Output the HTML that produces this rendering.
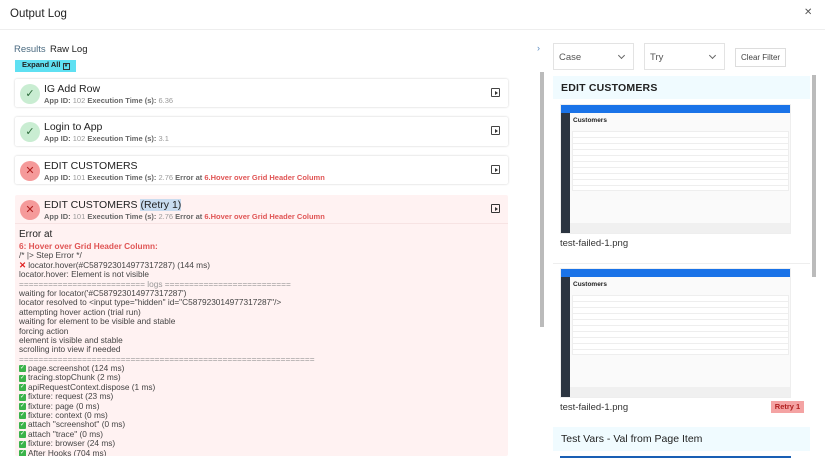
<!DOCTYPE html>
<html><head><style>
*{box-sizing:border-box;margin:0;padding:0}
html,body{width:825px;height:471px;overflow:hidden}
body{background:#fff;font-family:"Liberation Sans",sans-serif;color:#222;position:relative}
.a{position:absolute}
.card{position:absolute;left:15px;width:493px;background:#fff;box-shadow:0 0 2px rgba(0,0,0,.2);border-radius:2px}
.circ{position:absolute;left:5px;top:5px;width:20px;height:20px;border-radius:50%;text-align:center;line-height:20px;font-size:11px}
.ok{background:#c9edd2;color:#2c6a3a}
.bad{background:#f59a9a;color:#b02020}
.t{position:absolute;left:29px;top:4px;font-size:10.5px;color:#222}
.s{position:absolute;left:29px;top:17px;font-size:7.5px;font-weight:bold;color:#666;white-space:nowrap}
.s span{font-weight:normal;color:#999}
.s i{font-style:normal;color:#e05555}
.play{position:absolute;right:8px;top:9px;width:9px;height:9px;border:1px solid #444;border-radius:1px}
.play:after{content:"";position:absolute;left:2.5px;top:1.5px;border-left:3.5px solid #333;border-top:2.5px solid transparent;border-bottom:2.5px solid transparent}
.clip{position:absolute;left:15px;top:226px;width:493px;height:230px;overflow:hidden}
.log{position:absolute;left:4px;top:16px;font-size:8.3px;color:#444}
.log div{height:9.4px;line-height:9.4px;white-space:nowrap;position:relative}
.ck{display:inline-block;width:7px;height:7px;background:#3bb34a;border-radius:1px;margin-right:2px;vertical-align:middle;color:#fff;font-size:6px;line-height:7px;text-align:center}
.sel{position:absolute;top:43px;height:27px;border:1px solid #e3e3e3;font-size:9.5px;color:#555;padding:8px 5px}
.sel:after{content:"";position:absolute;right:9px;top:9px;width:4px;height:4px;border-right:1px solid #666;border-bottom:1px solid #666;transform:rotate(45deg)}
.shot{position:absolute;left:560px;width:231px;height:130px;background:#fafafa;border:1px solid #eee;overflow:hidden}
.shot .bar{position:absolute;left:0;top:0;width:100%;height:8px;background:#1a73e8}
.shot .side{position:absolute;left:0;top:8px;width:9px;height:122px;background:#2b3440}
.shot .h{position:absolute;left:12px;top:12px;font-size:6.5px;font-weight:bold}
.shot .tbl{position:absolute;left:11px;top:26px;width:217px;height:60px;background:#fff;border:1px solid #eee;background-image:repeating-linear-gradient(#fff 0 5px,#eee 5px 6px)}
.shot .ft{position:absolute;left:9px;top:118px;width:222px;height:12px;background:#f0f0f0}
</style></head><body>
<div class="a" style="left:10px;top:8px;font-size:11.5px">Output Log</div>
<div class="a" style="left:804px;top:7px;font-size:10px;color:#555">✕</div>
<div class="a" style="left:0;top:29px;width:825px;height:1px;background:#eee"></div>
<div class="a" style="left:14px;top:44px;font-size:9.5px;color:#4a6a80">Results</div>
<div class="a" style="left:50px;top:44px;font-size:9.5px;color:#222">Raw Log</div>
<div class="a" style="left:15px;top:60px;width:61px;height:12px;background:#5fe0f2;font-size:7.5px;font-weight:bold;padding:0 0 0 7px;line-height:9px">Expand All <span style="display:inline-block;width:7px;height:7px;border:1px solid #333;font-size:5px;line-height:5px;text-align:center">▾</span></div>

<div class="card" style="top:79px;height:28px"><div class="circ ok">✓</div><div class="t">IG Add Row</div><div class="s">App ID: <span>102</span> Execution Time (s): <span>6.36</span></div><div class="play"></div></div>
<div class="card" style="top:117px;height:29px"><div class="circ ok">✓</div><div class="t">Login to App</div><div class="s">App ID: <span>102</span> Execution Time (s): <span>3.1</span></div><div class="play"></div></div>
<div class="card" style="top:156px;height:28px"><div class="circ bad">✕</div><div class="t">EDIT CUSTOMERS</div><div class="s">App ID: <span>101</span> Execution Time (s): <span>2.76</span> Error at <i>6.Hover over Grid Header Column</i></div><div class="play"></div></div>
<div class="card" style="top:195px;height:261px;background:#fff2f2;box-shadow:none"><div class="circ bad">✕</div><div class="t">EDIT CUSTOMERS <span style="background:#c9dcef">(Retry 1)</span></div><div class="s">App ID: <span>101</span> Execution Time (s): <span>2.76</span> Error at <i>6.Hover over Grid Header Column</i></div><div class="play" style="border-color:#333"></div><div style="position:absolute;left:0;top:28px;width:100%;height:1px;background:#f7e3e3"></div></div>
<div class="clip">
<div class="a" style="left:4px;top:3px;font-size:10px;color:#222">Error at</div>
<div class="log">
<div style="color:#e05555;font-weight:bold">6: Hover over Grid Header Column:</div>
<div>/* |&gt; Step Error */</div>
<div><span style="color:#e02020;font-weight:bold">✕</span> locator.hover(#C587923014977317287) (144 ms)</div>
<div>locator.hover: Element is not visible</div>
<div><span style="color:#999">========================== logs ==========================</span></div>
<div>waiting for locator('#C587923014977317287')</div>
<div>locator resolved to &lt;input type="hidden" id="C587923014977317287"/&gt;</div>
<div>attempting hover action (trial run)</div>
<div>waiting for element to be visible and stable</div>
<div>forcing action</div>
<div>element is visible and stable</div>
<div>scrolling into view if needed</div>
<div style="color:#999">=============================================================</div>
<div><span class="ck">✓</span>page.screenshot (124 ms)</div>
<div><span class="ck">✓</span>tracing.stopChunk (2 ms)</div>
<div><span class="ck">✓</span>apiRequestContext.dispose (1 ms)</div>
<div><span class="ck">✓</span>fixture: request (23 ms)</div>
<div><span class="ck">✓</span>fixture: page (0 ms)</div>
<div><span class="ck">✓</span>fixture: context (0 ms)</div>
<div><span class="ck">✓</span>attach "screenshot" (0 ms)</div>
<div><span class="ck">✓</span>attach "trace" (0 ms)</div>
<div><span class="ck">✓</span>fixture: browser (24 ms)</div>
<div><span class="ck">✓</span>After Hooks (704 ms)</div>
</div></div>
<div class="a" style="left:540px;top:72px;width:4px;height:255px;background:#bbb"></div>

<div class="a" style="left:537px;top:43px;font-size:9px;color:#5a8ac0">›</div>
<div class="sel" style="left:553px;width:81px">Case</div>
<div class="sel" style="left:644px;width:81px">Try</div>
<div class="a" style="left:735px;top:48px;width:51px;height:19px;border:1px solid #ddd;font-size:8px;color:#444;text-align:center;line-height:17px">Clear Filter</div>
<div class="a" style="left:553px;top:76px;width:257px;height:23px;background:#f0fbff;font-size:10.5px;font-weight:bold;color:#222;padding:6px 8px;letter-spacing:.2px">EDIT CUSTOMERS</div>
<div class="shot" style="top:104px"><div class="bar"></div><div class="side"></div><div class="h">Customers</div><div class="tbl"></div><div class="ft"></div></div>
<div class="a" style="left:560px;top:238px;font-size:9.5px;color:#333">test-failed-1.png</div>
<div class="a" style="left:553px;top:263px;width:257px;height:1px;background:#eee"></div>
<div class="shot" style="top:268px"><div class="bar"></div><div class="side"></div><div class="h">Customers</div><div class="tbl"></div><div class="ft"></div></div>
<div class="a" style="left:560px;top:402px;font-size:9.5px;color:#333">test-failed-1.png</div>
<div class="a" style="left:771px;top:401px;width:33px;height:12px;background:#f4a3a3;font-size:7.5px;font-weight:bold;color:#b02020;text-align:center;line-height:12px">Retry 1</div>
<div class="a" style="left:553px;top:427px;width:257px;height:24px;background:#f0fbff;font-size:10.5px;color:#222;padding:6px 8px">Test Vars - Val from Page Item</div>
<div class="a" style="left:560px;top:456px;width:231px;height:2px;background:#1a5fb4"></div>
<div class="a" style="left:812px;top:75px;width:4px;height:202px;background:#bbb"></div>
</body></html>
